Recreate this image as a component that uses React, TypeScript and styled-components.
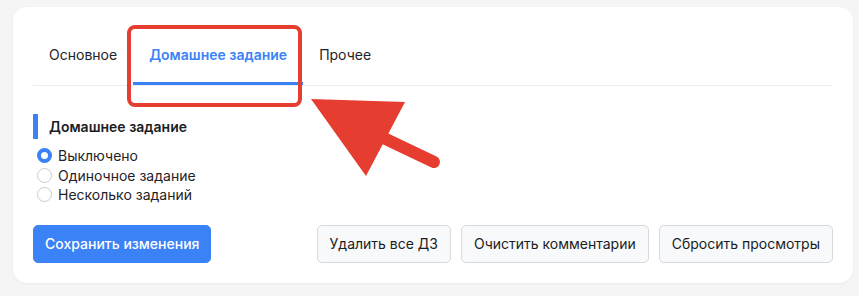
import React, {useState} from 'react';
import styled, {createGlobalStyle} from 'styled-components';

const GlobalStyle = createGlobalStyle`
  body {
    margin: 0;
    background: #f5f5f6;
    font-family: Inter, "Noto Sans", sans-serif;
    color: #1f2328;
  }
`

const tabs = ['Основное', 'Домашнее задание', 'Прочее']

const modes = ['Выключено', 'Одиночное задание', 'Несколько заданий']

export default function App() {
    const [activeTab, setActiveTab] = useState(1)
    const [mode, setMode] = useState(0)

    return (
        <Page>
            <GlobalStyle/>
            <Card>
                <TabList>
                    {tabs.map((t, i) => (
                        <Tab key={t} active={i === activeTab} onClick={() => setActiveTab(i)}>{t}</Tab>
                    ))}
                </TabList>
                <Section>
                    <SectionTitle>Домашнее задание</SectionTitle>
                    <RadioGroup>
                        {modes.map((m, i) => (
                            <RadioRow key={m} onClick={() => setMode(i)}>
                                <RadioDot checked={i === mode}/>
                                {m}
                            </RadioRow>
                        ))}
                    </RadioGroup>
                </Section>
                <Footer>
                    <PrimaryButton>Сохранить изменения</PrimaryButton>
                    <ButtonGroup>
                        <Button>Удалить все ДЗ</Button>
                        <Button>Очистить комментарии</Button>
                        <Button>Сбросить просмотры</Button>
                    </ButtonGroup>
                </Footer>
            </Card>
            <Annotation width="859" height="296" viewBox="0 0 859 296">
                <rect x="129" y="27" width="171" height="78" rx="6" fill="none" stroke="#e53d30" strokeWidth="4"/>
                <line x1="371" y1="132" x2="434" y2="162" stroke="#e53d30" strokeWidth="12" strokeLinecap="round"/>
                <polygon points="311,99 405,102 366,176" fill="#e53d30"/>
            </Annotation>
        </Page>
    );
}

const Page = styled.div`
  position: relative;
  padding: 7px 6px 13px 13px;
`

const Card = styled.div`
  background: #fff;
  border-radius: 14px;
  box-shadow: 0 1px 3px rgba(0, 0, 0, 0.05);
  padding: 20px;
`

const TabList = styled.div`
  display: flex;
  border-bottom: 1px solid #ebecef;
`

const Tab = styled.div<{ active: boolean }>`
  padding: 18px 16px 17px;
  line-height: 20px;
  font-size: 14px;
  font-weight: ${props => props.active ? 600 : 400};
  color: ${props => props.active ? '#3b82f6' : '#1f2328'};
  border-bottom: 3px solid ${props => props.active ? '#3b82f6' : 'transparent'};
  cursor: pointer;
`

const Section = styled.div`
  margin-top: 28px;
`

const SectionTitle = styled.div`
  border-left: 5px solid #3b82f6;
  padding-left: 11px;
  line-height: 25px;
  font-size: 14px;
  font-weight: 600;
  color: #1a1d23;
`

const RadioGroup = styled.div`
  display: flex;
  flex-direction: column;
  margin-top: 7px;
`

const RadioRow = styled.label`
  display: flex;
  align-items: center;
  gap: 6px;
  height: 19.5px;
  padding-left: 4px;
  font-size: 14px;
  color: #1f2328;
  cursor: pointer;
`

const RadioDot = styled.span<{ checked: boolean }>`
  box-sizing: border-box;
  width: 15px;
  height: 15px;
  border-radius: 50%;
  background: #fff;
  border: ${props => props.checked ? '4px solid #3b82f6' : '1px solid #c9cbcf'};
`

const Footer = styled.div`
  display: flex;
  justify-content: space-between;
  align-items: center;
  margin-top: 20px;
`

const ButtonGroup = styled.div`
  display: flex;
  gap: 10px;
`

const Button = styled.button`
  height: 38px;
  padding: 0 12px;
  border: 1px solid #d6d8dc;
  border-radius: 5px;
  background: #f8f9fa;
  font-family: Inter, "Noto Sans", sans-serif;
  font-size: 14px;
  color: #1a1d23;
  cursor: pointer;
`

const PrimaryButton = styled(Button)`
  padding: 0 11px;
  border-color: #3b82f6;
  background: #3b82f6;
  color: #fff;
  font-weight: 500;
`

const Annotation = styled.svg`
  position: absolute;
  left: 0;
  top: 0;
  pointer-events: none;
`
